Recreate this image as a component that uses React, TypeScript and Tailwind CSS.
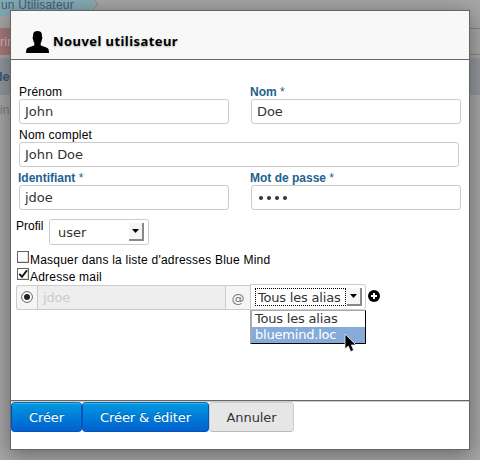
import React from "react";

const ui = "font-['DejaVu_Sans',sans-serif] text-[#333]";

function Label({ text, required = false }: { text: string; required?: boolean }) {
  return (
    <label className={`block h-[18px] whitespace-nowrap text-[12px] leading-[22px] ${required ? "-ml-px font-bold text-[#23618e]" : "tracking-[0.22px] text-black"}`}>
      {text}
      {required && <span className="font-normal"> *</span>}
    </label>
  );
}

function Field({ value }: { value: string }) {
  return (
    <div className={`h-[25px] rounded-[3px] border border-[#ccc] bg-white pl-[5px] text-[13px] leading-[24px] tracking-[-0.05px] ${ui}`}>
      {value}
    </div>
  );
}

function ArrowButton() {
  return (
    <span className="flex h-[18px] w-[15px] shrink-0 items-center justify-center border-r-2 border-b-2 border-[#888] bg-[#f5f5f5]">
      <svg width="7" height="4" viewBox="0 0 7 4"><path d="M0 0h7L3.5 4z" fill="#000" /></svg>
    </span>
  );
}

function Checkbox({ text, checked = false }: { text: string; checked?: boolean }) {
  return (
    <div className="flex h-[17px] text-[12px] leading-[18px] tracking-[0.22px] whitespace-nowrap text-black">
      <span className="mr-px h-[12px] w-[12px] shrink-0 border border-[#65625f] bg-white shadow-[inset_-1px_-1px_#ddd]">
        {checked && (
          <svg width="10" height="10" viewBox="0 0 10 10" fill="none" className="block">
            <path d="M1.3 4.8 4 7.8 9 1.2" stroke="#111" strokeWidth="1.9" />
          </svg>
        )}
      </span>
      {text}
    </div>
  );
}

const blueButton =
  "h-[30px] rounded-[4px] border border-[#0055b8] border-t-[#0075bd] bg-linear-to-b from-[#0799df] to-[#0560cf] text-center leading-[29px] text-white shadow-[inset_0_1px_0_#3bade4] [text-shadow:0_-1px_0_#0003]";

export default function App() {
  return (
    <div className="relative h-[460px] w-[480px] overflow-hidden bg-[#a6a6a6] font-['Liberation_Sans',Arial,sans-serif]">
      {/* Dimmed page underneath the dialog */}
      <div className="flex h-full flex-col">
        <div className="relative h-[16px] w-full">
          <svg width="100" height="16" viewBox="0 0 100 16" className="absolute top-0 left-0">
            <path d="M0 0H92L96 4 84 16H0z" fill="#85aab5" />
            <path d="M94 0l4 4-6 7" fill="none" stroke="#868686" />
          </svg>
          <span className="relative block pl-px text-[12px] leading-[10px] tracking-[0.2px] whitespace-nowrap text-[#3f6078]">
            un Utilisateur
          </span>
        </div>
        <div className="mt-[12px] flex h-[27px] justify-between">
          <div className="w-[12px] bg-[#a9797b] text-[13px] leading-[27px] text-[#c9bcbc]">rin</div>
          <div className="w-[12px] border-t border-b border-[#858585]" />
        </div>
        <div className="mt-[3px] flex h-[37px] justify-between bg-[#92969c]">
          <span className="-ml-px text-[13px] leading-[38px] font-bold text-[#3a5c74]">len</span>
        </div>
        <span className="text-[12px] leading-[30px] text-[#7a7a7a]">in</span>
      </div>
      <div className="absolute top-[10px] left-[10px] flex h-[440px] w-[460px] flex-col border border-[#666] bg-white shadow-[0_4px_20px_#0006]">
        <header className="flex h-[49px] shrink-0 items-end border-b border-[#666] bg-[#f8f8f8] pl-[15px]">
          <svg width="23" height="22" viewBox="0 0 23 22" className="mb-[6px]">
            <path d="M8 1Q11.5-.8 15 1Q16.2 3 15.9 5.5Q16.9 6.5 15.8 9Q15.5 11 14.7 12v2.2c1.5 1.3 6.5 1.6 7.7 3.8q.6 1.3.6 4H0q0-2.7.6-4c1.2-2.2 6.2-2.5 7.7-3.8V12Q7.5 11 7.2 9Q6.1 6.5 7.1 5.5Q6.8 3 8 1z" fill="#000" />
          </svg>
          <h1 className="mb-[9px] ml-[4px] font-['Noto_Sans',sans-serif] text-[13px] leading-[18px] font-bold tracking-[0.43px] whitespace-nowrap text-black [text-shadow:0_1px_2px_#0004]">
            Nouvel utilisateur
          </h1>
        </header>
        <main className="h-[341px] shrink-0 border-b border-[#666] pt-[21px]">
          <div className="ml-[8px] flex gap-[22px]">
            <div className="w-[210px]"><Label text="Prénom" /><Field value="John" /></div>
            <div className="w-[210px]"><Label text="Nom" required /><Field value="Doe" /></div>
          </div>
          <div className="ml-[8px] w-[440px]"><Label text="Nom complet" /><Field value="John Doe" /></div>
          <div className="ml-[8px] flex gap-[22px]">
            <div className="w-[210px]"><Label text="Identifiant" required /><Field value="jdoe" /></div>
            <div className="w-[210px]">
              <Label text="Mot de passe" required />
              <div className="flex h-[25px] items-center gap-[4px] rounded-[3px] border border-[#ccc] pl-[7px]">
                {[0, 1, 2, 3].map((i) => <i key={i} className="h-[4px] w-[4px] rounded-full bg-[#333]" />)}
              </div>
            </div>
          </div>
          <div className="mt-[9px] ml-[5px] flex h-[26px]">
            <span className="w-[33px] text-[12px] leading-[14px] text-black">Profil</span>
            <div className={`flex w-[100px] items-center justify-between rounded-[3px] border border-[#ccc] pr-[4px] pl-[8px] text-[13px] ${ui}`}>
              <span className="pt-px">user</span><ArrowButton />
            </div>
          </div>
          <div className="mt-[6px] ml-[6px]">
            <Checkbox text="Masquer dans la liste d'adresses Blue Mind" />
            <Checkbox text="Adresse mail" checked />
          </div>
          <div className={`-mt-px ml-[5px] flex h-[26px] items-center text-[13px] tracking-[-0.2px] ${ui}`}>
            <span className="flex h-[25px] w-[21px] items-center justify-center rounded-l-[3px] border border-r-0 border-[#ccc] bg-[#f5f5f5]">
              <svg width="12" height="12" viewBox="0 0 12 12"><circle cx="6" cy="6" r="5.4" fill="#fff" stroke="#65625f" /><circle cx="6" cy="6" r="3" fill="#222" /></svg>
            </span>
            <span className="h-[25px] w-[189px] border border-[#ccc] bg-[#eee] pl-[5px] leading-[23px] text-[#ccc]">jdoe</span>
            <span className="h-[25px] w-[24px] border-y border-[#ccc] bg-[#f5f5f5] text-center leading-[26px] text-[#777]">@</span>
            <div className="relative flex h-[26px] w-[116px] items-center rounded-r-[3px] border border-[#ccc] bg-white pl-[4px]">
              <span className="h-[18px] w-[91px] shrink-0 border border-dotted border-black pl-[2px] leading-[17px] whitespace-nowrap">Tous les alias</span>
              <span className="ml-px flex"><ArrowButton /></span>
              <div className="absolute top-[25px] left-[-1px] h-[34px] w-[116px] border border-l-2 border-[#aaa] border-r-black border-b-black bg-white leading-[16px]">
                <div className="h-[16px] pl-[3px]">Tous les alias</div>
                <div className="h-[16px] bg-[#86abd9] pl-[3px] text-white">bluemind.loc</div>
              </div>
              <svg className="absolute top-[48px] left-[93px]" width="14" height="20" viewBox="0 0 14 20">
                <path d="M1 1v15l3.3-3 2.4 5.6 3-1.3-2.4-5.3H12z" fill="#000" stroke="#eee" strokeWidth=".8" />
              </svg>
            </div>
            <svg width="12" height="12" viewBox="0 0 12 12" className="mb-[2px] ml-[2px]">
              <circle cx="6" cy="6" r="6" fill="#000" /><path d="M6 3v6M3 6h6" stroke="#fff" strokeWidth="2" />
            </svg>
          </div>
        </main>
        <footer className={`flex h-[48px] items-start border-t border-[#ccc] text-[13px] tracking-[-0.1px] ${ui}`}>
          <button className={`${blueButton} w-[71px]`}>Créer</button>
          <button className={`${blueButton} w-[127px]`}>Créer &amp; éditer</button>
          <button className="h-[30px] w-[85px] rounded-[4px] border border-[#ccc] border-b-[#b8b8b8] bg-[#e6e6e6] leading-[29px]">Annuler</button>
        </footer>
      </div>
    </div>
  );
}
